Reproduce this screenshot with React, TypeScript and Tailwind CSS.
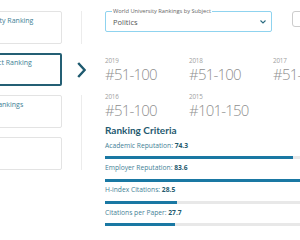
import React from "react";

const cards = [
  { label: "University Ranking", indent: "pl-[12px]", selected: false },
  { label: "Subject Ranking", indent: "pl-[18px]", selected: true },
  { label: "Other Rankings", indent: "pl-[12px]", selected: false },
  { label: "", indent: "pl-[12px]", selected: false },
];

const years = [
  { year: "2019", rank: "#51-100" },
  { year: "2018", rank: "#51-100" },
  { year: "2017", rank: "#51-100" },
  { year: "2016", rank: "#51-100" },
  { year: "2015", rank: "#101-150" },
];

const criteria = [
  { label: "Academic Reputation", value: 74.3 },
  { label: "Employer Reputation", value: 83.6 },
  { label: "H-index Citations", value: 28.5 },
  { label: "Citations per Paper", value: 27.7 },
];

export default function App() {
  return (
    <div
      className="w-[300px] h-[240px] overflow-hidden bg-white flex"
      style={{ fontFamily: "'Open Sans', sans-serif" }}
    >
      {/* Left cards */}
      <div className="-ml-[40px] w-[102px] shrink-0 pt-[11px] flex flex-col gap-[9px]">
        {cards.map((c, i) => (
          <div
            key={i}
            className={
              "h-[33px] rounded-[2px] " +
              c.indent +
              (c.selected
                ? " pt-[3px] border-2 border-[#245f74]"
                : " pt-[4px] border border-[#e3e3e3]")
            }
          >
            <span className="block whitespace-nowrap text-[7px] leading-[9px] text-[#3e8095]">
              {c.label}
            </span>
          </div>
        ))}
      </div>

      {/* Indicator column */}
      <div className="w-[43px] shrink-0 pt-[11px] pl-[19px] flex flex-col">
        <div className="w-px h-[33px] bg-[#ececec]" />
        <div className="h-[51px] flex items-center -ml-[4px]">
          <svg width="9" height="16" viewBox="0 0 9 16" fill="none">
            <path
              d="M1.2 1 L7.6 8 L1.2 15"
              stroke="#1e5a6f"
              strokeWidth="2.4"
              strokeLinecap="butt"
              strokeLinejoin="miter"
            />
          </svg>
        </div>
        <div className="w-px h-[75px] bg-[#ececec]" />
      </div>

      {/* Right panel */}
      <div className="w-[300px] shrink-0 pt-[11px]">
        <div className="flex items-start gap-[20px]">
          <div className="relative w-[167px] h-[21px] shrink-0 border border-[#8fd3ef] rounded-[2px] flex items-center pl-[7px]">
            <span className="absolute -top-[4px] left-[6px] px-[1px] bg-white text-[5.7px] leading-[7px] text-[#666] whitespace-nowrap">
              World University Rankings by Subject
            </span>
            <span className="text-[7.5px] leading-[10px] text-[#555] mt-[1px]">Politics</span>
            <svg
              className="absolute right-[5px] top-[8px]"
              width="6"
              height="4"
              viewBox="0 0 6 4"
              fill="none"
            >
              <path d="M0.5 0.5 L3 3 L5.5 0.5" stroke="#2b6b80" strokeWidth="1.1" />
            </svg>
          </div>
          <div className="w-[40px] h-[16px] shrink-0 border border-[#cccccc] rounded-[3px]" />
        </div>

        <div className="mt-[25px] grid grid-cols-[84px_84px_84px] gap-y-[9px]">
          {years.map((y) => (
            <div key={y.year} className="flex flex-col">
              <span className="text-[6.3px] leading-[8px] tracking-[-0.2px] text-[#a0a0a0]">{y.year}</span>
              <span className="text-[15px] leading-[19px] font-light tracking-[-0.8px] text-[#8f8f8f] whitespace-nowrap">
                {y.rank}
              </span>
            </div>
          ))}
        </div>

        <div
          className="mt-[4px] text-[10px] leading-[12px] font-bold text-[#1f5a70]"
          style={{ fontFamily: "Lato, 'Open Sans', sans-serif" }}
        >
          Ranking Criteria
        </div>

        <div className="mt-[5.8px] flex flex-col gap-[4.83px]">
          {criteria.map((c) => (
            <div key={c.label} className="flex flex-col">
              <span className="text-[6.7px] leading-[8px] text-[#3f8196] whitespace-nowrap">
                {c.label}: <span className="font-bold text-[#245a6e]">{c.value}</span>
              </span>
              <div className="mt-[6.5px] w-[253px] h-[3px] bg-[#e8e8e8]">
                <div className="h-full bg-[#1a78a3]" style={{ width: `${c.value}%` }} />
              </div>
            </div>
          ))}
        </div>
      </div>
    </div>
  );
}
